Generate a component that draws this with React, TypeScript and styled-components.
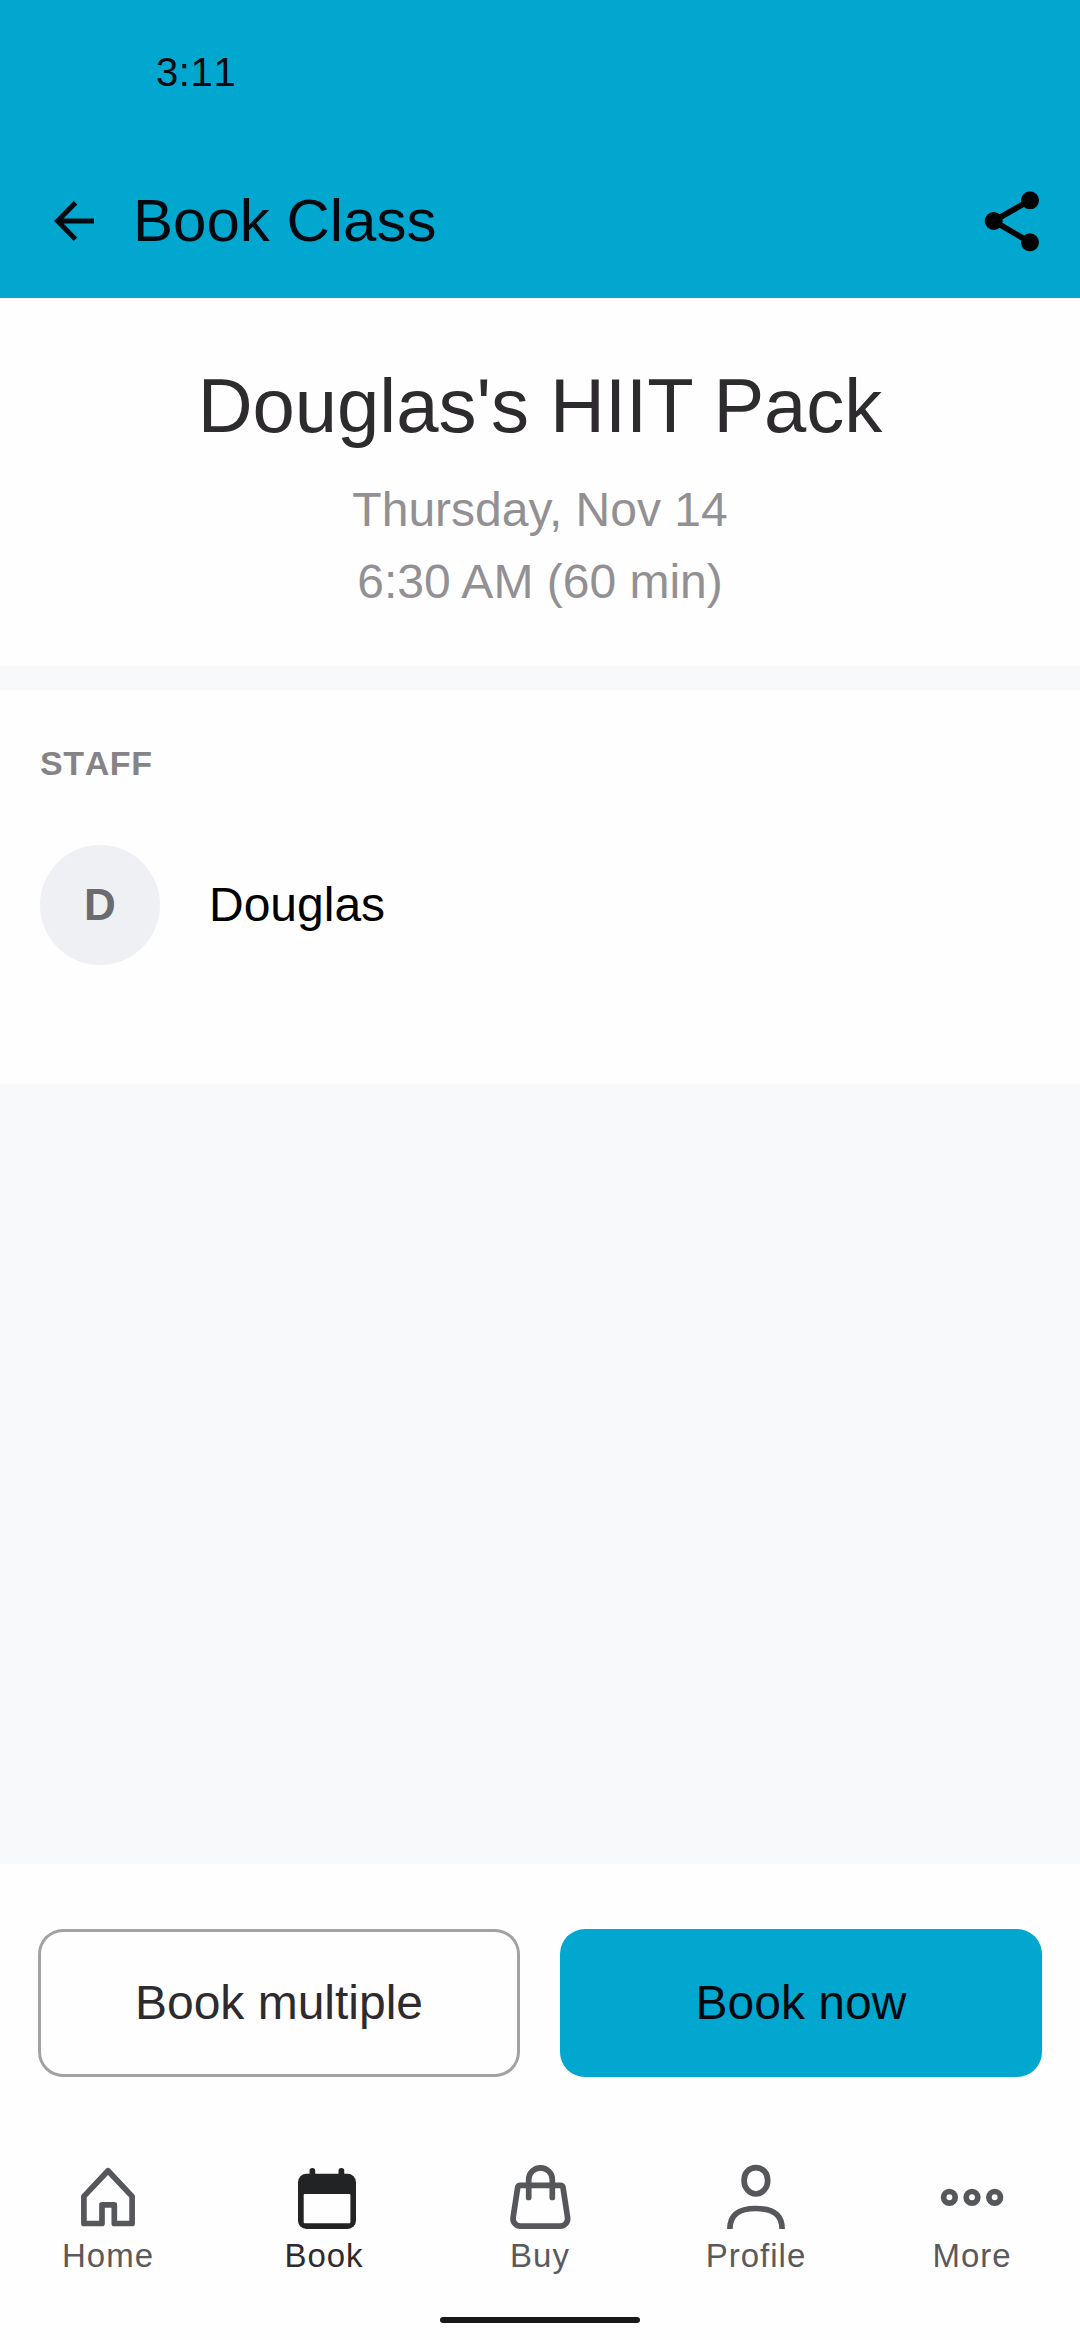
import React from "react";
import styled, { createGlobalStyle } from "styled-components";

const GlobalStyle = createGlobalStyle`
  *, *::before, *::after { box-sizing: border-box; }
  body { margin: 0; background: #fefefe; }
  button { font: inherit; border: 0; padding: 0; background: none; cursor: pointer; }
  h1, h2, p { margin: 0; font-weight: 400; }
`;

const Screen = styled.div`
  display: flex;
  flex-direction: column;
  width: 1080px;
  height: 2340px;
  overflow: hidden;
  background: #f8f9fb;
  font-family: "Liberation Sans", Arial, sans-serif;
  color: #000;
`;

const Header = styled.header`
  flex: none;
  height: 298px;
  background: #02a7d0;
  color: #020a0f;
`;

const StatusBar = styled.div`
  display: flex;
  align-items: center;
  height: 144px;
  padding-left: 156px;
  font-size: 40px;
  font-kerning: none;
  letter-spacing: 0.6px;
`;

const AppBar = styled.div`
  display: flex;
  align-items: center;
  height: 153px;
  padding: 0 36px 0 50px;
`;

const IconButton = styled.button<{ $size: number }>`
  display: flex;
  width: ${(p) => p.$size}px;
  height: ${(p) => p.$size}px;
  color: ${(p) => (p.$size > 50 ? "#000" : "#020a0f")};
`;

const AppTitle = styled.h1`
  flex: 1;
  margin-left: 35px;
  font-size: 60px;
  line-height: 72px;
`;

const ClassInfo = styled.section`
  flex: none;
  height: 368px;
  padding-top: 60px;
  background: #fefefe;
  text-align: center;
`;

const ClassName = styled.h2`
  margin-bottom: 20px;
  color: #2d2b2e;
  font-size: 76px;
  line-height: 96px;
`;

const ClassTime = styled.p`
  color: #929093;
  font-size: 48px;
  line-height: 72px;
`;

const StaffSection = styled.section`
  flex: none;
  height: 394px;
  margin-top: 24px;
  padding: 53px 40px 0;
  background: #fefefe;
`;

const SectionLabel = styled.h2`
  color: #858386;
  font-size: 34px;
  font-weight: 700;
  font-kerning: none;
  line-height: 40px;
  letter-spacing: 0.6px;
`;

const StaffRow = styled.div`
  display: flex;
  align-items: center;
  gap: 49px;
  margin-top: 62px;
`;

const Avatar = styled.div`
  display: flex;
  align-items: center;
  justify-content: center;
  width: 120px;
  height: 120px;
  border-radius: 50%;
  background: #eff0f3;
  color: #696b6f;
  font-size: 44px;
  font-weight: 700;
`;

const StaffName = styled.p`
  font-size: 48px;
  line-height: 56px;
`;

const Actions = styled.div`
  display: flex;
  flex: none;
  gap: 40px;
  margin-top: auto;
  padding: 65px 38px 83px;
  background: #fefefe;
`;

const ActionButton = styled.button<{ $primary?: boolean }>`
  flex: 1;
  height: 148px;
  padding-bottom: 1px;
  border-radius: 25px;
  font-size: 48px;
  line-height: 53px;
  background: ${(p) => (p.$primary ? "#02a7d0" : "#fefefe")};
  color: ${(p) => (p.$primary ? "#020a0f" : "#2d2b2e")};
  box-shadow: ${(p) => (p.$primary ? "none" : "inset 0 0 0 3px #a3a1a4")};
`;

const BottomNav = styled.nav`
  display: grid;
  flex: none;
  grid-template-columns: repeat(5, 1fr);
  background: #fefefe;
`;

const NavItem = styled.button<{ $active?: boolean }>`
  display: flex;
  flex-direction: column;
  align-items: center;
  gap: 4px;
  color: ${(p) => (p.$active ? "#2d2b2e" : "#5b595c")};
  font-size: 33px;
  line-height: 40px;
  letter-spacing: 1px;
`;

const NavIcon = styled.svg`
  display: block;
  width: 72px;
  height: 72px;
  fill: none;
  stroke: #55575a;
  stroke-width: 5.7px;
`;

const GestureArea = styled.div`
  display: flex;
  flex: none;
  justify-content: center;
  height: 64px;
  padding-top: 41px;
  background: #fefefe;
`;

const GestureBar = styled.div`
  width: 200px;
  height: 6px;
  border-radius: 3px;
  background: #19171a;
`;

const BackIcon = () => (
  <svg width="48" height="48" viewBox="0 0 48 48" fill="none" stroke="currentColor" strokeWidth="5">
    <path d="M44 24H7M25.5 5.8 7.6 24l17.9 18.2" strokeLinejoin="miter" />
  </svg>
);

const ShareIcon = () => (
  <svg width="64" height="64" viewBox="0 0 64 64" fill="currentColor">
    <path d="M50 11.3 13.7 32 50 53.3" fill="none" stroke="currentColor" strokeWidth="5.8" />
    <circle cx="50" cy="11.3" r="9" />
    <circle cx="13.7" cy="32" r="9" />
    <circle cx="50" cy="53.3" r="9" />
  </svg>
);

const HomeIcon = () => (
  <NavIcon viewBox="0 0 72 72">
    <path
      d="M36 10.7 60.1 36.4V63.5H42.3V44.9H30v18.6H11.9V36.4Z"
      strokeLinejoin="round"
    />
  </NavIcon>
);

const CalendarIcon = () => (
  <NavIcon viewBox="0 0 72 72">
    <rect x="10" y="13.7" width="58" height="55.3" rx="8.5" fill="#212325" stroke="none" />
    <rect x="15.7" y="34" width="46.7" height="29.2" rx="1" fill="#fefefe" stroke="none" />
    <path d="M24.4 10.8V18M53.4 10.8V18" stroke="#212325" strokeLinecap="round" />
  </NavIcon>
);

const BagIcon = () => (
  <NavIcon viewBox="0 0 72 72">
    <path d="M16.6 25.4H56.1a3 3 0 0 1 3 2.6L63.6 57.6a7.6 7.6 0 0 1-7.6 8.6H16.7A7.6 7.6 0 0 1 9.1 57.6L13.6 28a3 3 0 0 1 3-2.6Z" />
    <path d="M24.7 37.5V19.6a11.8 11.8 0 0 1 23.6 0V37.5" strokeLinecap="round" />
  </NavIcon>
);

const ProfileIcon = () => (
  <NavIcon viewBox="0 0 72 72">
    <path d="M35.9 7.7C43 7.7 47.7 13 47.7 20.4S42.6 34 35.9 34 24.1 27.8 24.1 20.4 28.8 7.7 35.9 7.7Z" />
    <path d="M9.9 69C9.9 54 19.5 48.5 36 48.5S62.1 54 62.1 69" />
  </NavIcon>
);

const MoreIcon = () => (
  <NavIcon viewBox="0 0 72 72">
    <circle cx="13.4" cy="37.3" r="5.8" />
    <circle cx="36" cy="37.3" r="5.8" />
    <circle cx="58.7" cy="37.3" r="5.8" />
  </NavIcon>
);

const navItems = [
  { label: "Home", Icon: HomeIcon },
  { label: "Book", Icon: CalendarIcon, active: true },
  { label: "Buy", Icon: BagIcon },
  { label: "Profile", Icon: ProfileIcon },
  { label: "More", Icon: MoreIcon },
];

export default function App() {
  return (
    <>
      <GlobalStyle />
      <Screen>
        <Header>
          <StatusBar>3:11</StatusBar>
          <AppBar>
            <IconButton $size={48} aria-label="Back">
              <BackIcon />
            </IconButton>
            <AppTitle>Book Class</AppTitle>
            <IconButton $size={64} aria-label="Share">
              <ShareIcon />
            </IconButton>
          </AppBar>
        </Header>
        <ClassInfo>
          <ClassName>Douglas's HIIT Pack</ClassName>
          <ClassTime>Thursday, Nov 14</ClassTime>
          <ClassTime>6:30 AM (60 min)</ClassTime>
        </ClassInfo>
        <StaffSection>
          <SectionLabel>STAFF</SectionLabel>
          <StaffRow>
            <Avatar>D</Avatar>
            <StaffName>Douglas</StaffName>
          </StaffRow>
        </StaffSection>
        <Actions>
          <ActionButton>Book multiple</ActionButton>
          <ActionButton $primary>Book now</ActionButton>
        </Actions>
        <BottomNav>
          {navItems.map(({ label, Icon, active }) => (
            <NavItem key={label} $active={active}>
              <Icon />
              {label}
            </NavItem>
          ))}
        </BottomNav>
        <GestureArea>
          <GestureBar />
        </GestureArea>
      </Screen>
    </>
  );
}
